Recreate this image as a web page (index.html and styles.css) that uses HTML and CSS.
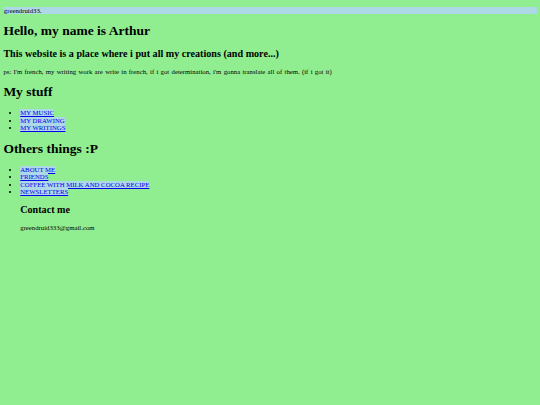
FILE: index.html
```html
<!DOCTYPE html>
<html lang="en">
<head>
<meta charset="utf-8">
<title>Arthur</title>
<link rel="stylesheet" href="styles.css">
</head>
<body>
<header class="topbar"><p class="topbar-text">greendruid33.</p></header>
<h1 class="title">Hello, my name is Arthur</h1>
<h2 class="subtitle">This website is a place where i put all my creations (and more...)</h2>
<p class="text">ps: I'm french, my writing work are write in french, if i got determination, i'm gonna translate all of them. (if i got it)</p>
<h1 class="title">My stuff</h1>
<ul class="links">
  <li><a href="#">MY MUSIC</a></li>
  <li><a href="#">MY DRAWING</a></li>
  <li><a href="#">MY WRITINGS</a></li>
</ul>
<h1 class="title">Others things :P</h1>
<ul class="links">
  <li><a href="#">ABOUT ME</a></li>
  <li><a href="#">FRIENDS</a></li>
  <li><a href="#">COFFEE WITH MILK AND COCOA RECIPE</a></li>
  <li><a href="#">NEWSLETTERS</a></li>
</ul>
<section class="contact">
  <h2 class="subtitle">Contact me</h2>
  <p class="email">greendruid333@gmail.com</p>
</section>
</body>
</html>
```
FILE: styles.css
```css
html {
  background: #90ee90;
}
body {
  margin: 0 3.375px 3.375px;
  padding-top: 0.1px;
  font-family: "Liberation Serif", "Times New Roman", serif;
  font-size: 6.75px;
  line-height: 7.6px;
  color: #000;
}
.topbar {
  background: #add8e6;
  margin: 6.6px 0 0 -3.375px;
  padding-left: 3.8px;
}
.topbar-text {
  margin: 0;
  line-height: 7.2px;
}
.title {
  font-size: 13.5px;
  line-height: 15.6px;
  margin: 9.05px 0;
  font-weight: bold;
}
.subtitle {
  font-size: 10.125px;
  line-height: 11.8px;
  margin: 8.4px 0;
  font-weight: bold;
}
.text {
  margin: 6.75px 0;
  word-spacing: 0.6px;
}
.email {
  margin: 6.75px 0;
}
.links {
  margin: 6.75px 0;
  padding-left: 16.875px;
}
.links a {
  color: #0000ee;
  background: #add8e6;
}
.contact {
  margin-left: 16.875px;
}
```
